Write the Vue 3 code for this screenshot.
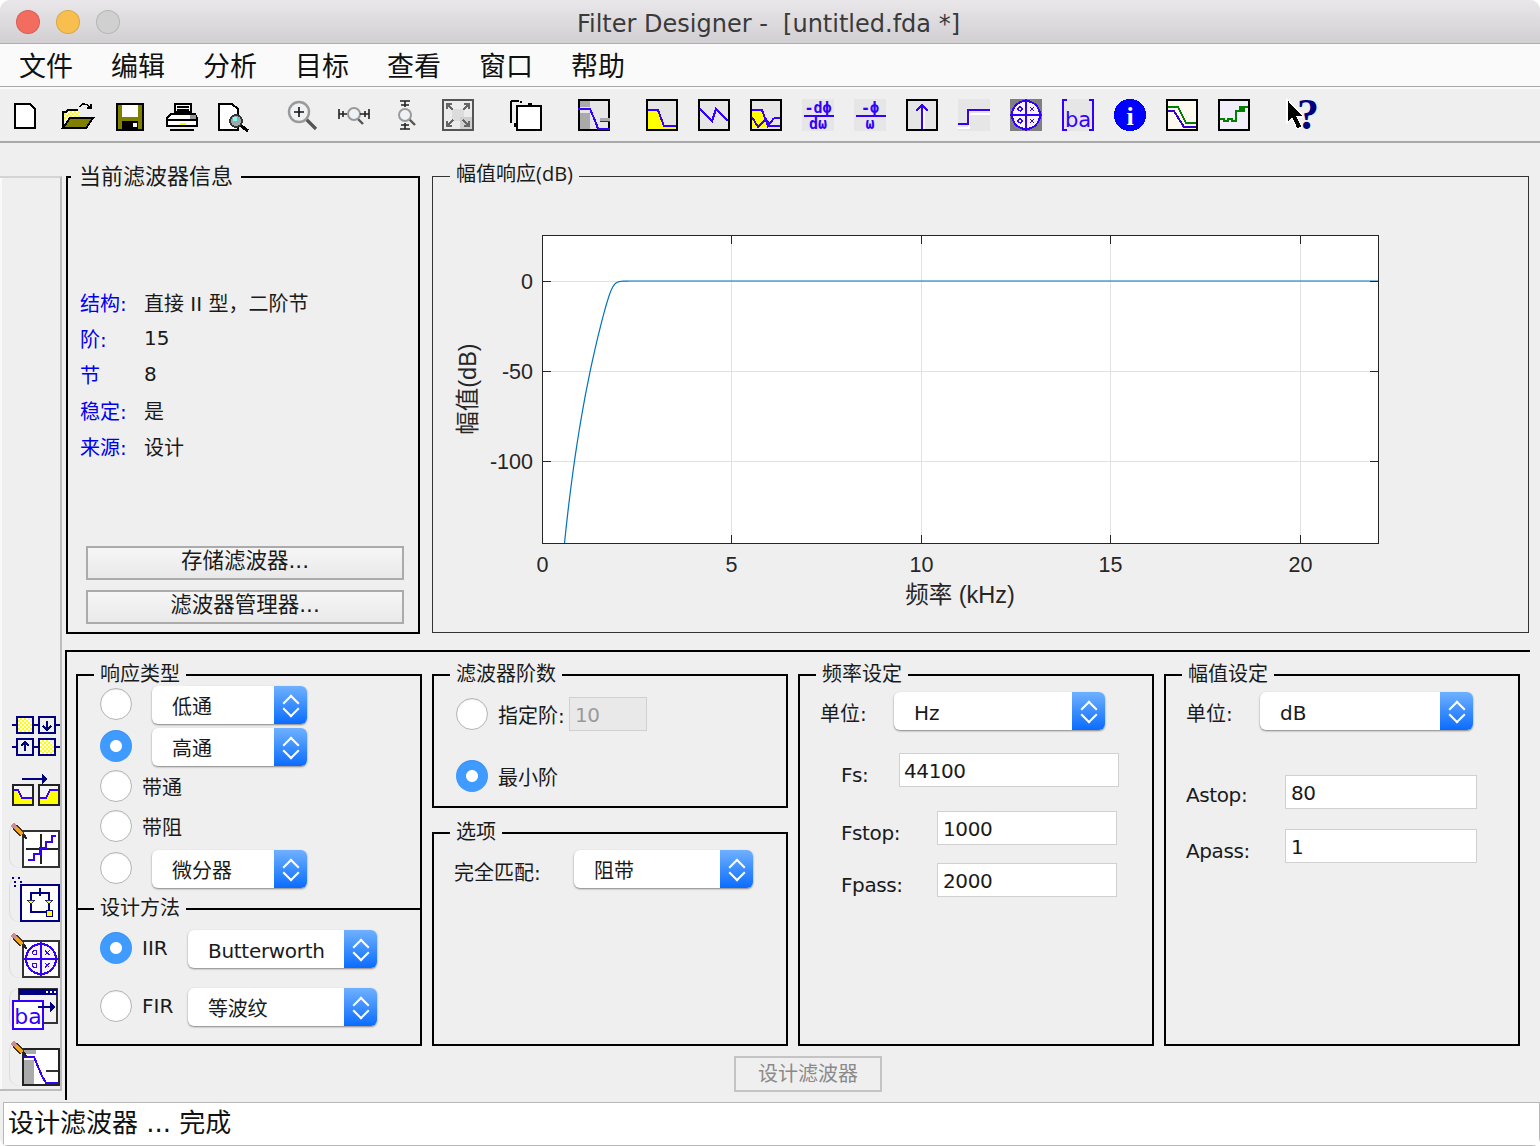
<template>
  <div class="window">
    <svg class="defs" width="0" height="0">
      <defs>
        <pattern id="dither" width="2" height="2" patternUnits="userSpaceOnUse">
          <rect width="2" height="2" fill="#fff" />
          <rect width="1" height="1" fill="#ff0" />
          <rect x="1" y="1" width="1" height="1" fill="#ff0" />
        </pattern>
        <symbol id="pencil" viewBox="0 0 12 12">
          <path d="M1.5 1.5l2 2" stroke="#c98f8f" stroke-width="3" />
          <path d="M3.5 3.5l4 4" stroke="#f2a41f" stroke-width="3" />
          <path d="M4 2l4.500 4.500M2 4l4.500 4.500" stroke="#333" stroke-width=".6" />
          <path d="M7 9l2-2 1.500 3.500z" fill="#222" />
        </symbol>
        <symbol id="polezero" viewBox="0 0 16 16">
          <circle cx="8" cy="8" r="7" fill="#f4f4f4" stroke="#3300ff" stroke-width="1" />
          <path d="M8 0v16M0 8h16" stroke="#3300ff" stroke-width="1" />
          <circle cx="5" cy="5" r="1" fill="none" stroke="#3300ff" stroke-width=".6" />
          <circle cx="5" cy="11" r="1" fill="none" stroke="#3300ff" stroke-width=".6" />
          <path d="M10 4l2 2m0-2l-2 2M10 10l2 2m0-2l-2 2" stroke="#3300ff" stroke-width=".6" />
        </symbol>
      </defs>
    </svg>

    <header class="titlebar">
      <div class="lights"><i class="red"></i><i class="yellow"></i><i class="gray"></i></div>
      <div class="title">Filter Designer -&nbsp; [untitled.fda *]</div>
    </header>

    <nav class="menubar">
      <span v-for="m in menus" :key="m" class="menu">{{ m }}</span>
    </nav>

    <div class="toolbar">
      <div class="tool-group">
        <span class="tool"><svg class="ic" viewBox="0 0 16 16"><path d="M2.5 2.5H10L12.5 5V14.5H2.5Z" fill="#fff" stroke="#000" /></svg></span>
        <span class="tool"><svg class="ic" viewBox="0 0 16 16"><path d="M1 7h1l1-1h5l1 1v3H1z" fill="url(#dither)" /><path d="M.5 14.5V6.5H2l1-1h5" fill="none" stroke="#000" /><path d="M.5 14.5L4 9.5H15.5L12 14.5Z" fill="#808000" stroke="#000" /><path d="M9 4c1-2 3-2 5 0M14.5 2.5v2h-2" fill="none" stroke="#000" stroke-width=".8" /></svg></span>
        <span class="tool"><svg class="ic" viewBox="0 0 16 16"><rect x="1.5" y="2.5" width="13" height="13" fill="#808000" stroke="#000" /><rect x="4" y="3" width="8" height="6" fill="#fff" /><rect x="4" y="11" width="8" height="4" fill="#000" /><rect x="9.5" y="12" width="2" height="2" fill="#fff" /></svg></span>
        <span class="tool"><svg class="ic" viewBox="0 0 16 16"><path d="M4.5 2.5h8v4h-8z" fill="#fff" stroke="#000" /><path d="M5.5 4h6M5.5 5.5h6" stroke="#000" stroke-width=".6" /><path d="M2.5 7.5h12l1 2v4h-15v-4z" fill="#fff" stroke="#000" /><path d="M1 10.5h14" stroke="#000" /><rect x="7" y="12" width="3" height="1" fill="#ff0" /><path d="M12 8h3v2h-3z" fill="#999" /><path d="M2 15.5h12" stroke="#000" /></svg></span>
        <span class="tool"><svg class="ic" viewBox="0 0 16 16"><path d="M.5 2.5H7L10 5V15.5H.5Z" fill="#fff" stroke="#000" /><path d="M11 13l4 3" stroke="#000" stroke-width="1.6" /><circle cx="9" cy="11" r="3" fill="#9aa" stroke="#333" stroke-width=".9" /><rect x="7.5" y="9" width="2" height="2" fill="#7ff" /></svg></span>
      </div>
      <div class="tool-group">
        <span class="tool"><svg class="ic smooth" viewBox="0 0 16 16"><path d="M10 10l5 5" stroke="#555" stroke-width="1.6" /><circle cx="6.5" cy="6.5" r="5" fill="#eef2f4" stroke="#9a9a9a" stroke-width="1.2" /><path d="M4 6.5h5M6.5 4v5" stroke="#111" stroke-width=".8" /></svg></span>
        <span class="tool"><svg class="ic smooth" viewBox="0 0 16 16"><path d="M10 10l2.500 2.500" stroke="#555" stroke-width="1.2" /><circle cx="8" cy="7.500" r="3" fill="#eef2f4" stroke="#999" /><path d="M.5 5v5M15.500 5v5M2.500 6v3M13.500 6v3M.5 7.500h4M11 7.500h4.500" stroke="#222" stroke-width=".8" /></svg></span>
        <span class="tool"><svg class="ic smooth" viewBox="0 0 16 16"><path d="M9.500 10l3 3" stroke="#555" stroke-width="1.2" /><circle cx="7.500" cy="8" r="3" fill="#eef2f4" stroke="#999" /><path d="M5 1h5M5 15h5M7.500 1v3M7.500 12v3M5.500 3h4M5.500 13h4" stroke="#222" stroke-width=".8" /></svg></span>
        <span class="tool"><svg class="ic" viewBox="0 0 16 16"><rect x=".5" y=".5" width="15" height="15" fill="#ececec" stroke="#555" /><rect x="5" y="5" width="6" height="6" fill="#dcdcdc" /><rect x="9" y="9" width="6" height="6" fill="#cfcfcf" /><path d="M2.500 5V2.500H5M2.500 2.500l3 3M13.500 5V2.500H11M13.500 2.500l-3 3M2.500 11v2.500H5M2.500 13.500l3-3M13.500 11v2.500H11M13.500 13.500l-3-3" fill="none" stroke="#666" stroke-width=".8" /></svg></span>
      </div>
      <div class="tool-group">
        <span class="tool"><svg class="ic" viewBox="0 0 16 16"><path d="M.5 1h4M.5 1v9M5 1.500h1M9 2.500h2M.5 10v2M2.500 12v2" stroke="#000" fill="none" /><rect x="3.500" y="3.500" width="12" height="12" fill="#fff" stroke="#000" /></svg></span>
      </div>
      <div class="tool-group">
        <span class="tool"><svg class="ic" viewBox="0 0 16 16"><rect x=".5" y=".5" width="15" height="15" fill="#e6e6e6" stroke="#000" /><rect x="1" y="1" width="5" height="3" fill="#aaa" /><rect x="1" y="7" width="5" height="8" fill="#aaa" /><path d="M0 5H6L9 12L10 15H16" fill="none" stroke="#3300ff" /><path d="M11 11h5" stroke="#333" /><rect x="11" y="9.500" width="5" height="1.500" fill="#aaa" /></svg></span>
      </div>
      <div class="tool-group">
        <span class="tool"><svg class="ic" viewBox="0 0 16 16"><rect x=".5" y=".5" width="15" height="15" fill="#e6e6e6" stroke="#000" /><path d="M1 5.500H5.500L9 14H15V15H1Z" fill="#ff0" /><path d="M1 5.500H6L9 13.500H15" fill="none" stroke="#3300ff" /></svg></span>
        <span class="tool"><svg class="ic" viewBox="0 0 16 16"><rect x=".5" y=".5" width="15" height="15" fill="#e6e6e6" stroke="#000" /><path d="M1 5l6 6 2-6 6 6" fill="none" stroke="#3300ff" /></svg></span>
        <span class="tool"><svg class="ic" viewBox="0 0 16 16"><rect x=".5" y=".5" width="15" height="15" fill="#e6e6e6" stroke="#000" /><path d="M1 5.500H6L9 14H1Z" fill="#ff0" /><path d="M1 5.500H6L9 13.500L12 9.500" fill="none" stroke="#3300ff" /><path d="M1 9l3 5 4-4 2 3.500h5M12 9.500h3" fill="none" stroke="#3300ff" /></svg></span>
        <span class="tool"><svg class="ic" viewBox="0 0 16 16"><rect width="16" height="16" fill="#e6e6e6" /><text x="8" y="7" class="mono blue">-dϕ</text><path d="M1 8.500h15" stroke="#3300ff" /><text x="8" y="15" class="mono blue">dω</text></svg></span>
        <span class="tool"><svg class="ic" viewBox="0 0 16 16"><rect width="16" height="16" fill="#e6e6e6" /><text x="8" y="7" class="mono blue">-ϕ</text><path d="M1 8.500h15" stroke="#3300ff" /><text x="8" y="15" class="mono blue">ω</text></svg></span>
        <span class="tool"><svg class="ic" viewBox="0 0 16 16"><rect x=".5" y=".5" width="15" height="15" fill="#e6e6e6" stroke="#000" /><path d="M8 3v12M5 6l3-3 3 3" fill="none" stroke="#3300ff" /><path d="M9 5v10" stroke="#fff" /></svg></span>
        <span class="tool"><svg class="ic" viewBox="0 0 16 16"><rect width="16" height="16" fill="#e6e6e6" /><path d="M0 13.500H5.500V6.500H16" fill="none" stroke="#fff" stroke-width="1" transform="translate(0 1)" /><path d="M0 12.500H5V5.500H16" fill="none" stroke="#3300ff" /></svg></span>
        <span class="tool"><svg class="ic" viewBox="0 0 16 16"><rect width="16" height="16" fill="#808080" /><use href="#polezero" width="16" height="16" /></svg></span>
        <span class="tool"><svg class="ic" viewBox="0 0 16 16"><rect width="16" height="16" fill="#e6e6e6" /><path d="M2.500.5H.5v15h2M13.500.5h2v15h-2" fill="none" stroke="#3300ff" /><text x="8" y="14" class="ba blue">ba</text></svg></span>
        <span class="tool"><svg class="ic" viewBox="0 0 16 16"><circle cx="8" cy="8" r="8" fill="#0000ff" /><text x="8" y="13" class="info-i">i</text></svg></span>
        <span class="tool"><svg class="ic" viewBox="0 0 16 16"><rect x=".5" y=".5" width="15" height="15" fill="#fffaf0" stroke="#000" /><path d="M1 4H6L10 12H15" fill="none" stroke="#008000" /><path d="M1 6H4L9 14H15" fill="none" stroke="#3300cc" /></svg></span>
        <span class="tool"><svg class="ic" viewBox="0 0 16 16"><rect x=".5" y=".5" width="15" height="15" fill="#f2effa" stroke="#000" /><path d="M1 10h2v1h2v-1h2v1h2V6h2V4h1v2h1V4h2" fill="none" stroke="#008000" /></svg></span>
      </div>
      <div class="tool-group">
        <span class="tool"><svg class="ic" viewBox="0 0 16 16"><path d="M.5 0V12L3 9.500 5.500 15 8 14 5.500 9H9Z" fill="#000" stroke="#fff" stroke-width=".6" /><text x="11" y="15" class="help">?</text></svg></span>
      </div>
    </div>

    <div class="main">
      <aside class="sidebar">
        <svg class="side h40" viewBox="0 0 25 20"><g fill="none" stroke="#000080"><path d="M4 1H9L11 4V8H4Z" fill="url(#dither)" stroke="none" /><rect x="3.500" y=".5" width="8" height="8" /><rect x="14.500" y=".5" width="8" height="8" /><rect x="3.500" y="11.500" width="8" height="8" /><path d="M15 12H20L22 15V19H15Z" fill="url(#dither)" stroke="none" /><rect x="14.500" y="11.500" width="8" height="8" /><path d="M1 4.500h2.500M11.500 4.500h3M22.500 4.500H25M1 15.500h2.500M11.500 15.500h3M22.500 15.500H25M18.500 2.500v4M16.500 5l2 2 2-2M7.500 13.500v4M5.500 15l2-2 2 2" /></g></svg>
        <svg class="side h34" viewBox="0 0 25 17"><path d="M6 3.500h11" stroke="#000080" /><path d="M16 1l3 2.500-3 2.500z" fill="#000080" /><rect x="1.500" y="6.500" width="10" height="10" fill="#ff0" stroke="#222" /><rect x="14.500" y="6.500" width="10" height="10" fill="#ff0" stroke="#222" /><path d="M2 7h9v6H6L4 9H2zM15 7h9v2h-4l-2 4h-3z" fill="#f4f4f4" /><path d="M2 9h2l2 4h5M15 13h3l2-4h4" fill="none" stroke="#3300ff" /></svg>
        <div class="side-btn h46"><svg class="side h46" viewBox="0 0 25 23"><rect x="6.500" y="4.500" width="18" height="18" fill="#fff" stroke="#333" /><path d="M8 13.500h16M15.500 6v15" stroke="#222" /><path d="M9 19h3v-3h3v-3h3v-3h3V7h2" fill="none" stroke="#3300ff" /><use href="#pencil" x="0" y="0" width="10" height="10" /></svg></div>
        <div class="side-btn tight h46"><svg class="side h46" viewBox="0 0 25 23"><path d="M1 1h1M4 1h1M2 3h1M5 3h1M2 5h1" stroke="#000080" /><rect x="5.500" y="4.500" width="19" height="18" fill="#fff" stroke="#000080" /><path d="M10 8.500h10M10.500 8.500v9.500h9V8.500M15 6v4" fill="none" stroke="#000080" /><path d="M8.500 12h4l-2 2zM17.500 12h4l-2 2z" fill="#ff0" stroke="#000080" stroke-width=".4" /><rect x="18" y="17" width="3" height="3" fill="#ff0" stroke="#000080" stroke-width=".5" /></svg></div>
        <div class="side-btn h46"><svg class="side h46" viewBox="0 0 25 23"><rect x="6.500" y="4.500" width="18" height="18" fill="#fff" stroke="#333" /><use href="#polezero" x="7" y="5" width="17" height="17" /><use href="#pencil" x="0" y="0" width="10" height="10" /></svg></div>
        <div class="side-btn h42"><svg class="side h42" viewBox="0 0 25 21"><rect x="4.500" y=".5" width="19" height="17" fill="#f2f2f2" stroke="#333" /><rect x="4.500" y=".5" width="19" height="3" fill="#000080" /><path d="M18 2h1M20 2h1M22 2h1" stroke="#fff" /><rect x="1.500" y="6.500" width="15" height="14" fill="#fff" stroke="#3300ff" /><text x="9" y="18" class="ba-lg blue">ba</text><path d="M14 9.500h6" stroke="#000080" /><path d="M20 7l3 2.500-3 2.500z" fill="#000080" /></svg></div>
        <div class="side-btn h46"><svg class="side h46" viewBox="0 0 25 23"><rect x="6.500" y="4.500" width="18" height="18" fill="#fff" stroke="#222" /><rect x="7" y="5" width="6" height="2" fill="#aaa" /><rect x="7" y="10" width="5" height="12" fill="#aaa" /><path d="M7 8.500H12L16 18L18 21.500H24" fill="none" stroke="#3300ff" /><path d="M18 15.500h6" stroke="#333" /><use href="#pencil" x="0" y="0" width="10" height="10" /></svg></div>
      </aside>

      <div class="content">
        <div class="top-row">
          <section class="info">
            <span class="legend legend-lg">当前滤波器信息</span>
            <div class="info-rows">
              <div v-for="row in infoRows" :key="row.label" class="info-row">
                <span class="info-label">{{ row.label }}</span><span>{{ row.value }}</span>
              </div>
            </div>
            <div class="info-btns">
              <button class="btn">存储滤波器...</button>
              <button class="btn">滤波器管理器...</button>
            </div>
          </section>

          <section class="plot">
            <span class="legend legend-plot">幅值响应(dB)</span>
            <svg class="plot-svg" viewBox="433 177 1095 455" width="1095" height="455">
              <defs><clipPath id="axes"><rect x="542" y="235" width="837" height="309" /></clipPath></defs>
              <rect x="542.500" y="235.500" width="836" height="308" fill="#fff" />
              <g stroke="#e1e1e1">
                <path v-for="t in xTicks" :key="t.label" :d="`M${t.x} 236V543`" />
                <path v-for="t in yTicks" :key="t.label" :d="`M543 ${t.y}H1378`" />
              </g>
              <polyline :points="curve" fill="none" stroke="#0072bd" stroke-width="1.200" clip-path="url(#axes)" />
              <rect x="542.500" y="235.500" width="836" height="308" fill="none" stroke="#262626" />
              <g stroke="#262626">
                <path v-for="t in xTicks" :key="t.label" :d="`M${t.x} 236v8M${t.x} 543v-8`" />
                <path v-for="t in yTicks" :key="t.label" :d="`M543 ${t.y}h8M1378 ${t.y}h-8`" />
              </g>
              <g class="tick">
                <text v-for="t in xTicks" :key="t.label" :x="t.x" y="572" text-anchor="middle">{{ t.label }}</text>
                <text v-for="t in yTicks" :key="t.label" x="533" :y="t.y + 7" text-anchor="end">{{ t.label }}</text>
              </g>
              <text class="axis-label" x="960" y="603" text-anchor="middle">频率 (kHz)</text>
              <text class="axis-label" text-anchor="middle" transform="translate(476 389) rotate(-90)">幅值(dB)</text>
            </svg>
          </section>
        </div>

        <section class="bottom">
          <div class="groups">
            <div class="group">
              <div class="resp">
                <span class="legend">响应类型</span>
                <div class="row r42"><i class="radio"></i><div class="select s-resp"><span>低通</span><b class="stepper"></b></div></div>
                <div class="row r41"><i class="radio on"></i><div class="select s-resp"><span>高通</span><b class="stepper"></b></div></div>
                <div class="row r40"><i class="radio"></i><span class="radio-label">带通</span></div>
                <div class="row r40"><i class="radio"></i><span class="radio-label">带阻</span></div>
                <div class="row r44"><i class="radio"></i><div class="select s-resp"><span>微分器</span><b class="stepper"></b></div></div>
              </div>
              <div class="method">
                <span class="legend">设计方法</span>
                <div class="row r58"><i class="radio on"></i><span class="radio-label m-label">IIR</span><div class="select s-method"><span>Butterworth</span><b class="stepper"></b></div></div>
                <div class="row r58"><i class="radio"></i><span class="radio-label m-label">FIR</span><div class="select s-method"><span>等波纹</span><b class="stepper"></b></div></div>
              </div>
            </div>

            <div class="stack">
              <div class="group order">
                <span class="legend">滤波器阶数</span>
                <div class="row r40"><i class="radio"></i><span class="radio-label order-label">指定阶:</span><div class="field disabled">10</div></div>
                <div class="row r40 order-gap"><i class="radio on"></i><span class="radio-label">最小阶</span></div>
              </div>
              <div class="group options">
                <span class="legend">选项</span>
                <div class="row r38"><span class="opt-label">完全匹配:</span><div class="select s-opt"><span>阻带</span><b class="stepper"></b></div></div>
              </div>
            </div>

            <div class="group freq">
              <span class="legend">频率设定</span>
              <div class="row r38"><span class="unit-label">单位:</span><div class="select s-unit1"><span>Hz</span><b class="stepper"></b></div></div>
              <div class="form-row fs"><span class="form-label l58">Fs:</span><div class="field w220">44100</div></div>
              <div class="form-row fstop"><span class="form-label l96">Fstop:</span><div class="field w180">1000</div></div>
              <div class="form-row fpass"><span class="form-label l96">Fpass:</span><div class="field w180">2000</div></div>
            </div>

            <div class="group mag">
              <span class="legend">幅值设定</span>
              <div class="row r38"><span class="unit-label">单位:</span><div class="select s-unit2"><span>dB</span><b class="stepper"></b></div></div>
              <div class="form-row astop"><span class="form-label l99">Astop:</span><div class="field w192">80</div></div>
              <div class="form-row apass"><span class="form-label l99">Apass:</span><div class="field w192">1</div></div>
            </div>
          </div>
          <button class="btn design" disabled>设计滤波器</button>
        </section>
      </div>
    </div>

    <footer class="status">设计滤波器 ... 完成</footer>
  </div>
</template>

<script setup>
import { computed } from 'vue'

const menus = ['文件', '编辑', '分析', '目标', '查看', '窗口', '帮助']

const infoRows = [
  { label: '结构:', value: '直接 II 型，二阶节' },
  { label: '阶:', value: '15' },
  { label: '节', value: '8' },
  { label: '稳定:', value: '是' },
  { label: '来源:', value: '设计' }
]

const xScale = 37.93
const xTicks = [0, 5, 10, 15, 20].map((k) => ({ label: String(k), x: Math.floor(542 + k * xScale) + 0.5 }))
const yTicks = [
  { label: '0', y: 281.5 },
  { label: '-50', y: 371.5 },
  { label: '-100', y: 461.5 }
]

// 15 阶巴特沃斯高通，Fpass 2 kHz / 1 dB，Fs 44.1 kHz
const curve = computed(() => {
  const warp = (f) => Math.tan((Math.PI * f) / 44.1)
  const cutoff = warp(2) * Math.pow(Math.pow(10, 0.1) - 1, 1 / 30)
  const pts = []
  for (let px = 558; px <= 1378; px += 1) {
    const f = (px + 1.5 - 542) / xScale
    const db = -10 * Math.log10(1 + Math.pow(cutoff / warp(f), 30))
    pts.push(`${px},${(281 - db * 1.81).toFixed(2)}`)
  }
  return pts.join(' ')
})
</script>

<style>
html, body { margin: 0; background: #fff; }
</style>

<style scoped>
* { box-sizing: border-box; }

.window {
  width: 1540px;
  height: 1146px;
  background: #efefef;
  border-radius: 10px 10px 8px 8px;
  overflow: hidden;
  color: #1a1a1a;
  font-family: "DejaVu Sans", "Noto Sans CJK SC", sans-serif;
  font-size: 20px;
}
.defs { position: absolute; }

.titlebar {
  height: 44px;
  display: grid;
  grid-template-columns: 1fr auto 1fr;
  align-items: center;
  background: linear-gradient(#e9e7e9, #d1cfd1);
  border-bottom: 1px solid #b0aeb0;
}
.lights { display: flex; gap: 16px; padding-left: 16px; }
.lights i { width: 24px; height: 24px; border-radius: 50%; border: 1px solid rgba(0, 0, 0, .12); }
.red { background: #f26d60; }
.yellow { background: #f8bf4f; }
.gray { background: #d0d0d0; }
.title { font-size: 24px; color: #3a3a3a; padding: 4px 3px 0 0; }

.menubar {
  height: 45px;
  padding-bottom: 2px;
  display: flex;
  align-items: center;
  background: #fafafa;
  box-shadow: inset 0 -2px 0 #fafafa, inset 0 -3px 0 #a9a9a9;
}
.menu { padding: 0 19px; font-size: 27px; line-height: 1; color: #111; margin-top: 2px; }

.toolbar {
  height: 54px;
  display: flex;
  gap: 16px;
  align-items: center;
  padding-bottom: 1px;
  border-bottom: 2px solid #a8a8a8;
}
.tool-group { display: flex; }
.tool { width: 52px; display: flex; justify-content: center; }
.ic { width: 32px; height: 32px; shape-rendering: crispEdges; display: block; overflow: visible; }
.smooth { shape-rendering: auto; }
.mono { font: 700 7.500px "DejaVu Sans Mono", monospace; text-anchor: middle; }
.blue { fill: #3300ff; }
.ba { font: 400 10.500px "DejaVu Sans", sans-serif; text-anchor: middle; }
.ba-lg { font: 400 11px "DejaVu Sans", sans-serif; text-anchor: middle; }
.info-i { font: 700 13px "Liberation Serif", serif; fill: #fff; text-anchor: middle; }
.help { font: 700 22px "Liberation Serif", serif; fill: #000080; text-anchor: middle; }

.main { display: flex; height: 959px; }
.sidebar {
  width: 62px;
  height: 915px;
  margin-top: 33px;
  padding: 0 0 3px 10px;
  display: flex;
  flex-direction: column;
  justify-content: flex-end;
  border-top: 2px solid #d4d4d4;
  border-right: 2px solid #bdbdbd;
  border-bottom: 2px solid #bdbdbd;
  box-shadow: inset 2px 0 0 #fafafa;
}
.side { width: 50px; display: block; shape-rendering: crispEdges; overflow: visible; flex: none; }
.side-btn { border-radius: 10px 0 0 10px; box-shadow: -1px 0 0 #dcdcdc; margin-top: 10px; }
.h34 { height: 34px; margin-top: 16px; }
.h40 { height: 40px; }
.h42 { height: 42px; }
.h46 { height: 46px; }
.side-btn:nth-of-type(1) { margin-top: 16px; }
.side-btn.tight { margin-top: 8px; }
.side-btn .side { margin-top: 0; }

.content { flex: 1; padding-top: 33px; }
.top-row { display: flex; gap: 12px; margin-left: 4px; height: 458px; }

.legend {
  position: absolute;
  top: -14px;
  left: 16px;
  padding: 0 6px;
  background: #efefef;
  line-height: 24px;
  white-space: nowrap;
}
.legend-lg { font-size: 22px; left: 3px; padding: 0 8px; top: -15px; line-height: 28px; }
.legend-plot { left: 17px; top: -15px; font-family: "Open Sans", "Noto Sans CJK SC", sans-serif; }

.info {
  position: relative;
  width: 354px;
  height: 458px;
  border: 2px solid #000;
  display: flex;
  flex-direction: column;
}
.info-rows { padding: 106px 0 0 12px; }
.info-row { height: 36px; display: flex; align-items: center; font-size: 20px; }
.info-label { width: 64px; color: #0000ee; }
.info-btns {
  margin-top: auto;
  padding: 0 0 8px 18px;
  display: flex;
  flex-direction: column;
  gap: 10px;
}
.btn {
  width: 318px;
  height: 34px;
  padding: 0 0 5px;
  background: linear-gradient(#f6f6f6, #e9e9e9);
  border: 2px solid #ababab;
  border-radius: 0;
  font: inherit;
  font-size: 21.500px;
  line-height: 1;
  color: #1a1a1a;
}

.plot {
  position: relative;
  width: 1097px;
  height: 457px;
  border: 1px solid #333;
}
.plot-svg { display: block; }
.tick { font: 21.500px "Liberation Sans", sans-serif; fill: #262626; }
.axis-label { font: 23.500px "Liberation Sans", "Noto Sans CJK SC", sans-serif; fill: #262626; }

.bottom {
  margin: 16px 0 0 3px;
  width: 1465px;
  height: 450px;
  padding: 22px 0 0 9px;
  border-top: 2px solid #000;
  border-left: 2px solid #000;
}
.groups {
  display: grid;
  grid-template-columns: 346px 356px 356px 356px;
  gap: 10px;
  height: 372px;
}
.group { position: relative; border: 2px solid #000; }
.stack { display: flex; flex-direction: column; gap: 24px; }

.resp { position: relative; height: 232px; padding: 7px 0 0 22px; }
.method { position: relative; height: 136px; padding: 9px 0 0 22px; border-top: 2px solid #000; }
.row { display: flex; align-items: center; }
.r38 { height: 38px; }
.r40 { height: 40px; }
.r41 { height: 41px; }
.r42 { height: 42px; }
.r44 { height: 44px; }
.r58 { height: 58px; }

.radio {
  flex: none;
  width: 32px;
  height: 32px;
  border-radius: 50%;
  background: #fff;
  border: 1px solid #b4b4b4;
  box-shadow: inset 0 1px 1px rgba(0, 0, 0, .08);
}
.radio.on {
  border: 0;
  background: radial-gradient(circle, #fff 0 5.500px, #3f9bff 6.500px);
}
.radio-label { margin-left: 10px; white-space: nowrap; }
.m-label { width: 46px; }
.order-label { width: 71px; }

.select {
  display: flex;
  height: 38px;
  background: #fff;
  border-radius: 6px;
  box-shadow: 0 1px 2px rgba(0, 0, 0, .45);
  overflow: hidden;
  flex: none;
}
.select span { flex: 1; padding-left: 20px; line-height: 42px; white-space: nowrap; }
.stepper {
  position: relative;
  width: 33px;
  flex: none;
  background: linear-gradient(#6fb1ff, #0a6cff);
}
.stepper::before, .stepper::after {
  content: "";
  position: absolute;
  left: 11px;
  width: 10px;
  height: 10px;
  border: solid #fff;
  border-width: 2px 0 0 2px;
  transform: rotate(45deg);
}
.stepper::before { top: 11px; }
.stepper::after { top: 17px; transform: rotate(225deg); }

.s-resp { width: 155px; margin: 2px 0 0 20px; }
.s-method { width: 189px; margin-top: 2px; letter-spacing: -.3px; }
.s-opt { width: 179px; }
.s-unit1 { width: 211px; }
.s-unit2 { width: 213px; }

.order { height: 134px; padding: 18px 0 0 22px; }
.order-gap { margin-top: 22px; }
.options { flex: 1; padding: 16px 0 0 20px; }
.opt-label { width: 120px; padding-top: 4px; }

.freq, .mag { padding: 16px 0 0 20px; }
.unit-label { width: 74px; padding-top: 2px; }
.form-row { display: flex; padding-left: 21px; }
.form-label { padding-top: 5px; line-height: 34px; height: 34px; letter-spacing: -.4px; }
.l58 { width: 58px; }
.l96 { width: 96px; }
.l99 { width: 99px; }
.fs { margin-top: 23px; }
.fstop { margin-top: 24px; }
.fpass { margin-top: 18px; }
.astop { margin-top: 45px; padding-left: 0; }
.astop .form-label { padding-top: 3px; }
.apass { margin-top: 20px; padding-left: 0; }

.field {
  height: 34px;
  padding-left: 5px;
  line-height: 34px;
  letter-spacing: -.4px;
  background: #fff;
  border: 1px solid #d0d0d0;
}
.w220 { width: 220px; padding-left: 4px; }
.w180 { width: 180px; }
.w192 { width: 192px; }
.disabled { width: 78px; flex: none; background: #e9e9e9; color: #9a9a9a; }

.btn.design {
  display: block;
  width: 148px;
  height: 36px;
  margin: 10px 0 0 658px;
  padding: 0;
  font-size: 20px;
  color: #8a8a8a;
  background: #efefef;
  border-color: #c4c4c4;
}

.status {
  height: 44px;
  margin: 0 0 0 3px;
  padding-left: 4px;
  background: #fff;
  border: 1px solid #b8b8b8;
  font-size: 26px;
  line-height: 40px;
  color: #111;
}
</style>
